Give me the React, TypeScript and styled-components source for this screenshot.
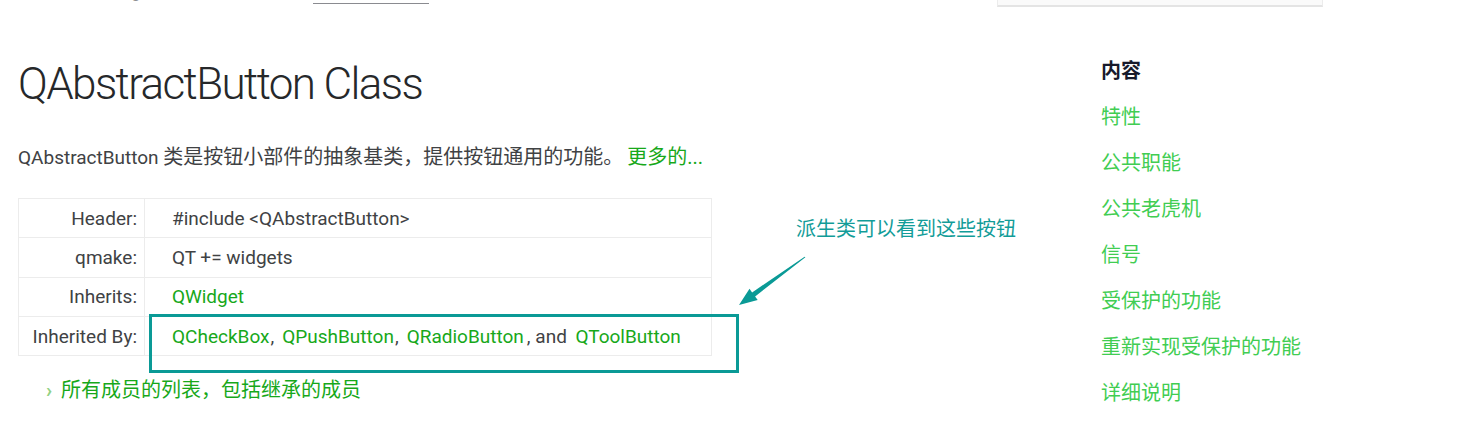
import React from "react";
import styled, { createGlobalStyle } from "styled-components";

const GlobalStyle = createGlobalStyle`
  html, body { margin: 0; padding: 0; background: #ffffff; }
  body {
    font-family: Roboto, "Noto Sans CJK SC", sans-serif;
    color: #404244;
    overflow: hidden;
  }
`;

const LATIN = `Roboto, "Noto Sans CJK SC", sans-serif`;
const TEAL = "#0a9a96";

const Page = styled.div`
  width: 1467px;
  height: 441px;
  overflow: hidden;
`;

const Header = styled.header`
  height: 7px;
  display: flex;
  align-items: flex-end;
  overflow: hidden;
`;

const Crumbs = styled.nav`
  width: 997px;
  height: 7px;
  overflow: hidden;
  display: flex;
  align-items: flex-end;
  padding-left: 20px;
  box-sizing: border-box;
`;

const CrumbText = styled.span`
  font-family: ${LATIN};
  font-size: 16px;
  line-height: 20px;
  margin-bottom: 3px;
  color: #8a8b8e;
  white-space: nowrap;
  display: flex;
`;

const CrumbItem = styled.span`
  width: 293px;
`;

const CrumbLink = styled.span`
  color: #8a8b8e;
  border-bottom: 1px solid #8a8b90;
  width: 116px;
  overflow: hidden;
`;

const SearchBox = styled.div`
  width: 326px;
  height: 7px;
  box-sizing: border-box;
  background: #fafafa;
  border: 1px solid #ececec;
  border-top: none;
  border-bottom: 2px solid #e4e4e4;
`;

const Layout = styled.div`
  display: flex;
`;

const Main = styled.main`
  width: 1083px;
  padding-left: 18px;
  box-sizing: border-box;
`;

const Title = styled.h1`
  margin: 50px 0 0 0;
  font-family: ${LATIN};
  font-weight: 300;
  font-size: 44px;
  line-height: 54px;
  letter-spacing: -1.6px;
  color: #26282a;
`;

const Brief = styled.p`
  margin: 33px 0 0 0;
  font-size: 19px;
  line-height: 26px;
  color: #404244;
`;

const Han = styled.span`
  font-size: 20px;
`;

const Link = styled.a`
  color: #17a81a;
  text-decoration: none;
`;

const MoreLink = styled(Link)`
  margin-left: 4px;
  font-size: 20px;
`;

const TableWrap = styled.div`
  position: relative;
  margin-top: 27px;
  width: 694px;
`;

const InfoTable = styled.table`
  width: 694px;
  border-collapse: collapse;
  font-size: 19px;
`;

const Row = styled.tr`
  height: 39.3px;
`;

const KeyCell = styled.td`
  width: 126px;
  text-align: right;
  padding: 0 7px 0 0;
  border: 1px solid #ececec;
  color: #404244;
  box-sizing: border-box;
`;

const ValueCell = styled.td`
  padding: 0 0 0 27px;
  border: 1px solid #ececec;
  color: #404244;
`;

const Sep = styled.span`
  margin: 0 8px 0 1px;
  color: #404244;
`;

const AndSep = styled.span`
  color: #404244;
  margin: 0 4px 0 3px;
`;

const HighlightBox = styled.div`
  position: absolute;
  left: 131px;
  top: 116px;
  width: 590px;
  height: 59px;
  box-sizing: border-box;
  border: 3.5px solid ${TEAL};
  pointer-events: none;
`;

const Annotation = styled.div`
  position: absolute;
  left: 778px;
  top: 18px;
  font-size: 20px;
  line-height: 26px;
  color: #129c98;
  white-space: nowrap;
`;

const ArrowSvg = styled.svg`
  position: absolute;
  left: 717px;
  top: 55px;
`;

const AllMembers = styled.div`
  margin-top: 21px;
  padding-left: 28px;
  display: flex;
  align-items: center;
  gap: 9px;
  font-size: 20px;
  line-height: 26px;
`;

const Chevron = styled.span`
  color: #92d184;
  font-size: 20px;
  font-weight: 700;
  line-height: 26px;
`;

const Sidebar = styled.aside`
  padding-left: 18px;
  padding-top: 50px;
  display: flex;
  flex-direction: column;
`;

const SideTitle = styled.h3`
  margin: 0;
  font-family: "Noto Sans CJK SC", sans-serif;
  font-size: 20px;
  font-weight: 700;
  line-height: 26px;
  color: #171a2b;
  margin-bottom: 20px;
`;

const SideLink = styled.a`
  font-family: "Noto Sans CJK SC", sans-serif;
  font-size: 20px;
  line-height: 26px;
  color: #41cd52;
  text-decoration: none;
  margin-bottom: 20px;
`;

const sideLinks = [
  "特性",
  "公共职能",
  "公共老虎机",
  "信号",
  "受保护的功能",
  "重新实现受保护的功能",
  "详细说明",
];

export default function App() {
  return (
    <Page>
      <GlobalStyle />
      <Header>
        <Crumbs>
          <CrumbText>
            <CrumbItem>Qt 5.12 › Qt Widgets › C++ Classes</CrumbItem>
            <CrumbLink>QAbstractButton</CrumbLink>
          </CrumbText>
        </Crumbs>
        <SearchBox />
      </Header>
      <Layout>
        <Main>
          <Title>QAbstractButton Class</Title>
          <Brief>
            QAbstractButton <Han>类是按钮小部件的抽象基类，提供按钮通用的功能。</Han>
            <MoreLink href="#">更多的...</MoreLink>
          </Brief>
          <TableWrap>
            <InfoTable>
              <tbody>
                <Row>
                  <KeyCell>Header:</KeyCell>
                  <ValueCell>#include &lt;QAbstractButton&gt;</ValueCell>
                </Row>
                <Row>
                  <KeyCell>qmake:</KeyCell>
                  <ValueCell>QT += widgets</ValueCell>
                </Row>
                <Row>
                  <KeyCell>Inherits:</KeyCell>
                  <ValueCell>
                    <Link href="#">QWidget</Link>
                  </ValueCell>
                </Row>
                <Row>
                  <KeyCell>Inherited By:</KeyCell>
                  <ValueCell>
                    <Link href="#">QCheckBox</Link>
                    <Sep>,</Sep>
                    <Link href="#">QPushButton</Link>
                    <Sep>,</Sep>
                    <Link href="#">QRadioButton</Link>
                    <AndSep>, and</AndSep>{" "}
                    <Link href="#">QToolButton</Link>
                  </ValueCell>
                </Row>
              </tbody>
            </InfoTable>
            <HighlightBox />
            <Annotation>派生类可以看到这些按钮</Annotation>
            <ArrowSvg width="76" height="58" viewBox="0 0 76 58">
              <polygon
                fill={TEAL}
                points="4,52 14.5,35.7 17.1,39.4 69.6,3.7 70.4,4.3 20.1,43.4 22.7,47.1"
              />
            </ArrowSvg>
          </TableWrap>
          <AllMembers>
            <Chevron>›</Chevron>
            <Link href="#">所有成员的列表，包括继承的成员</Link>
          </AllMembers>
        </Main>
        <Sidebar>
          <SideTitle>内容</SideTitle>
          {sideLinks.map((s) => (
            <SideLink key={s} href="#">
              {s}
            </SideLink>
          ))}
        </Sidebar>
      </Layout>
    </Page>
  );
}
